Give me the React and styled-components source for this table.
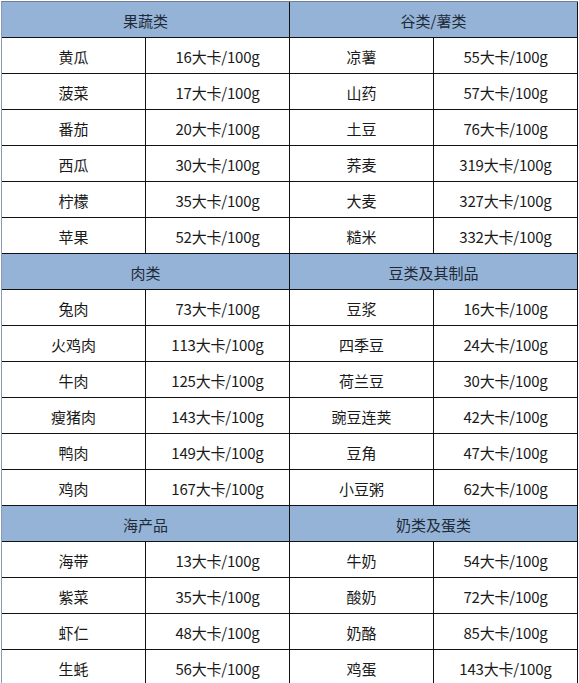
import React from "react";
import styled, { createGlobalStyle } from "styled-components";

const Global = createGlobalStyle`
  html, body { margin: 0; padding: 0; background: #fff; overflow: hidden; }
  body { font-family: "Noto Sans CJK SC", "Noto Sans", sans-serif; }
`;

const Page = styled.div`
  padding: 1px 0 0 1px;
`;

const Grid = styled.div`
  display: grid;
  grid-template-columns: repeat(4, 144px);
  grid-auto-rows: 36px;
  border-left: 1px solid #8a9ab0;
  border-top: 1px solid #6f7f95;
  width: max-content;
`;

const Cell = styled.div`
  display: flex;
  align-items: center;
  justify-content: center;
  padding-top: 2px;
  border-right: 1px solid #111;
  border-bottom: 1px solid #111;
  box-sizing: border-box;
  font-size: 15px;
  color: #1a1a1a;
  background: #fff;
  white-space: nowrap;
`;

const HeadCell = styled(Cell)`
  grid-column: span 2;
  background: #95b3d7;
  color: #1e2a36;
`;

const Value = styled.span`
  font-family: "Noto Sans CJK SC", sans-serif;
  letter-spacing: -0.2px;
`;

const sections = [
  [
    {
      title: "果蔬类",
      items: [
        ["黄瓜", "16大卡/100g"],
        ["菠菜", "17大卡/100g"],
        ["番茄", "20大卡/100g"],
        ["西瓜", "30大卡/100g"],
        ["柠檬", "35大卡/100g"],
        ["苹果", "52大卡/100g"],
      ],
    },
    {
      title: "谷类/薯类",
      items: [
        ["凉薯", "55大卡/100g"],
        ["山药", "57大卡/100g"],
        ["土豆", "76大卡/100g"],
        ["荞麦", "319大卡/100g"],
        ["大麦", "327大卡/100g"],
        ["糙米", "332大卡/100g"],
      ],
    },
  ],
  [
    {
      title: "肉类",
      items: [
        ["兔肉", "73大卡/100g"],
        ["火鸡肉", "113大卡/100g"],
        ["牛肉", "125大卡/100g"],
        ["瘦猪肉", "143大卡/100g"],
        ["鸭肉", "149大卡/100g"],
        ["鸡肉", "167大卡/100g"],
      ],
    },
    {
      title: "豆类及其制品",
      items: [
        ["豆浆", "16大卡/100g"],
        ["四季豆", "24大卡/100g"],
        ["荷兰豆", "30大卡/100g"],
        ["豌豆连荚", "42大卡/100g"],
        ["豆角", "47大卡/100g"],
        ["小豆粥", "62大卡/100g"],
      ],
    },
  ],
  [
    {
      title: "海产品",
      items: [
        ["海带", "13大卡/100g"],
        ["紫菜", "35大卡/100g"],
        ["虾仁", "48大卡/100g"],
        ["生蚝", "56大卡/100g"],
      ],
    },
    {
      title: "奶类及蛋类",
      items: [
        ["牛奶", "54大卡/100g"],
        ["酸奶", "72大卡/100g"],
        ["奶酪", "85大卡/100g"],
        ["鸡蛋", "143大卡/100g"],
      ],
    },
  ],
];

export default function App() {
  return (
    <Page>
      <Global />
      <Grid>
        {sections.map(([a, b], si) => (
          <React.Fragment key={si}>
            <HeadCell>{a.title}</HeadCell>
            <HeadCell>{b.title}</HeadCell>
            {a.items.map((row, ri) => (
              <React.Fragment key={ri}>
                <Cell>{row[0]}</Cell>
                <Cell><Value>{row[1]}</Value></Cell>
                <Cell>{b.items[ri][0]}</Cell>
                <Cell><Value>{b.items[ri][1]}</Value></Cell>
              </React.Fragment>
            ))}
          </React.Fragment>
        ))}
      </Grid>
    </Page>
  );
}
